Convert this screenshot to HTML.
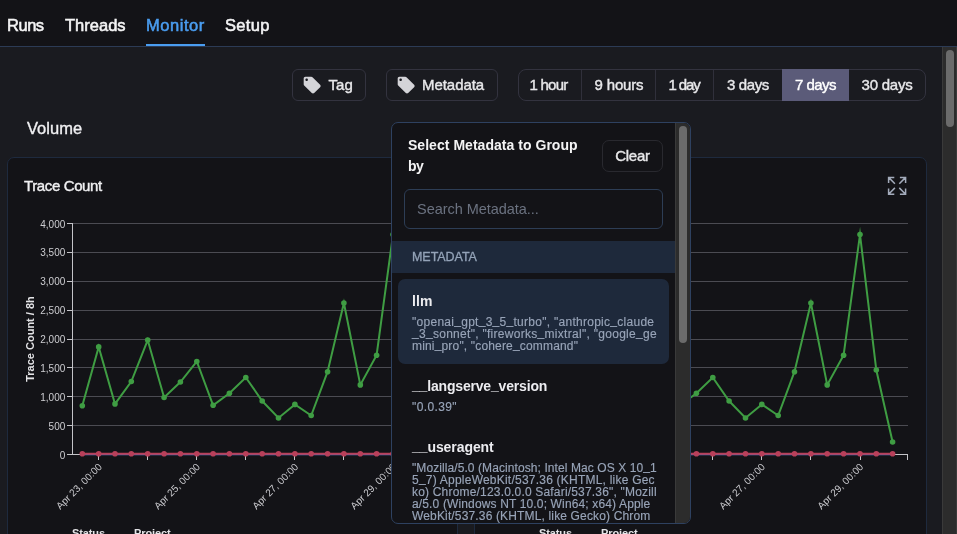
<!DOCTYPE html>
<html><head><meta charset="utf-8">
<style>
*{box-sizing:border-box;margin:0;padding:0}
html,body{width:957px;height:534px;overflow:hidden;background:#1a1b20;font-family:"Liberation Sans",sans-serif;color:#f4f4f5}
.abs{position:absolute}
#hdr{left:0;top:0;width:957px;height:47px;background:#131317;border-bottom:1px solid #2c3b55}
.tab{position:absolute;top:16px;-webkit-text-stroke:0.55px currentColor;font-size:16.5px;line-height:18px;color:#f4f4f5;white-space:nowrap}
.tab.on{color:#4a9df0}
#ul{left:146px;top:44px;width:59px;height:2px;background:#4a9df0}
.btn{-webkit-text-stroke:0.4px currentColor;position:absolute;border:1px solid #33333f;border-radius:6px;height:32px;top:69px;font-size:15px;line-height:30px;color:#e8e8ea;white-space:nowrap}
.seg{position:absolute;top:0;height:30px;line-height:30px;text-align:center;font-size:15px;color:#e8e8ea;border-left:1px solid #30303b}
.card{position:absolute;top:157px;height:400px;background:#131317;border:1px solid #1e2a3e;border-radius:7px}
.ct{position:absolute;top:177px;-webkit-text-stroke:0.4px currentColor;font-size:15px;line-height:18px;color:#f0f0f2}
svg text.tk{font-family:"Liberation Sans",sans-serif;font-size:10px;fill:#cdcdd1}
svg text.yl{font-family:"Liberation Sans",sans-serif;font-size:11px;font-weight:bold;fill:#e4e4e7}
.lg{position:absolute;top:526.3px;font-size:11px;font-weight:bold;color:#e4e4e7;line-height:14px}
#pop{left:391px;top:122px;width:300px;height:402px;background:#131317;border:1px solid #2e4160;border-radius:7px;overflow:hidden}
.it{position:absolute;left:20px;font-size:14px;font-weight:bold;color:#ececf0;white-space:nowrap;line-height:16px}
.iv{position:absolute;left:20px;font-size:12px;line-height:12px;color:#98a4b8;-webkit-text-stroke:0.15px currentColor;white-space:nowrap}
.iv span{display:block}
.iv i{font-style:normal;position:relative;top:-1.6px}
.it i{font-style:normal;position:relative;top:-1px}
.hd{font-size:14px;line-height:21px;font-weight:bold;color:#f4f4f5;white-space:nowrap}
#root{position:absolute;left:0;top:0;width:957px;height:534px;will-change:transform}
</style></head><body><div id="root">
<div class="abs" id="hdr"></div>
<div class="tab" style="left:7px;letter-spacing:-0.477px">Runs</div>
<div class="tab" style="left:65px;letter-spacing:0.011px">Threads</div>
<div class="tab on" style="left:146px;letter-spacing:0.528px">Monitor</div>
<div class="tab" style="left:225px;letter-spacing:0.319px">Setup</div>
<div class="abs" id="ul"></div>

<div class="btn" style="left:292px;width:74px"><svg class="abs" style="left:8.7px;top:4.8px" width="20.3" height="20.3" viewBox="0 0 24 24"><path fill="#d4d4d8" d="M21.41 11.58l-9-9C12.05 2.22 11.55 2 11 2H4c-1.1 0-2 .9-2 2v7c0 .55.22 1.05.59 1.42l9 9c.36.36.86.58 1.41.58s1.05-.22 1.41-.59l7-7c.37-.36.59-.86.59-1.41s-.23-1.06-.59-1.42zM5.5 7C4.67 7 4 6.330 4 5.500S4.670 4 5.500 4 7 4.670 7 5.500 6.330 7 5.500 7z"/></svg><span class="abs" style="left:35.4px;letter-spacing:0.1px">Tag</span></div>
<div class="btn" style="left:386px;width:112px"><svg class="abs" style="left:8.7px;top:4.8px" width="20.3" height="20.3" viewBox="0 0 24 24"><path fill="#d4d4d8" d="M21.41 11.58l-9-9C12.05 2.22 11.55 2 11 2H4c-1.100 0-2 .900-2 2v7c0 .550.220 1.050.590 1.420l9 9c.360.360.860.580 1.410.580s1.050-.220 1.410-.590l7-7c.370-.360.590-.860.590-1.410s-.230-1.060-.590-1.420zM5.500 7C4.670 7 4 6.330 4 5.500S4.670 4 5.500 4 7 4.670 7 5.500 6.330 7 5.500 7z"/></svg><span class="abs" style="left:35px;letter-spacing:-0.05px">Metadata</span></div>

<div class="btn" style="left:518px;width:408px;border-radius:8px">
<div class="seg" style="left:0;width:63px;border-left:0;padding-right:4px;letter-spacing:-0.749px">1 hour</div>
<div class="seg" style="left:62px;width:75px;letter-spacing:-0.174px">9 hours</div>
<div class="seg" style="left:136px;width:59px;padding-right:2px;letter-spacing:-1.126px">1 day</div>
<div class="seg" style="left:194px;width:69px;letter-spacing:-0.381px">3 days</div>
<div class="seg" style="left:263px;width:67px;top:-1px;height:32px;line-height:32px;background:#5b5b79;color:#fff;border-left:0;letter-spacing:-0.561px">7 days</div>
<div class="seg" style="left:330px;width:76px;border-left:0;letter-spacing:-0.224px">30 days</div>
</div>

<div class="abs" style="left:27px;top:118px;-webkit-text-stroke:0.35px currentColor;font-size:16.5px;line-height:20px;color:#f0f0f2;letter-spacing:0.011px">Volume</div>

<div class="card" style="left:7px;width:451px"></div>
<div class="card" style="left:474px;width:453px"></div>
<div class="ct" style="left:24px;letter-spacing:-0.378px">Trace Count</div>
<div class="ct" style="left:490px;letter-spacing:-0.378px">Trace Count</div>

<svg class="abs" style="left:0;top:0" width="957" height="534" viewBox="0 0 957 534">
<line x1="72.5" x2="440.5" y1="425.62" y2="425.62" stroke="#4b4b52" stroke-width="1" shape-rendering="crispEdges"/>
<line x1="72.5" x2="440.5" y1="396.75" y2="396.75" stroke="#4b4b52" stroke-width="1" shape-rendering="crispEdges"/>
<line x1="72.5" x2="440.5" y1="367.88" y2="367.88" stroke="#4b4b52" stroke-width="1" shape-rendering="crispEdges"/>
<line x1="72.5" x2="440.5" y1="339.00" y2="339.00" stroke="#4b4b52" stroke-width="1" shape-rendering="crispEdges"/>
<line x1="72.5" x2="440.5" y1="310.12" y2="310.12" stroke="#4b4b52" stroke-width="1" shape-rendering="crispEdges"/>
<line x1="72.5" x2="440.5" y1="281.25" y2="281.25" stroke="#4b4b52" stroke-width="1" shape-rendering="crispEdges"/>
<line x1="72.5" x2="440.5" y1="252.38" y2="252.38" stroke="#4b4b52" stroke-width="1" shape-rendering="crispEdges"/>
<line x1="72.5" x2="440.5" y1="223.50" y2="223.50" stroke="#4b4b52" stroke-width="1" shape-rendering="crispEdges"/>
<line x1="72.5" x2="72.5" y1="223.0" y2="455.0" stroke="#c4c4c8" stroke-width="1" shape-rendering="crispEdges"/>
<line x1="72.0" x2="441.0" y1="454.5" y2="454.5" stroke="#c4c4c8" stroke-width="1" shape-rendering="crispEdges"/>
<line x1="440.5" x2="440.5" y1="454.5" y2="459.5" stroke="#c4c4c8" stroke-width="1" shape-rendering="crispEdges"/>
<line x1="66.5" x2="72.5" y1="454.50" y2="454.50" stroke="#c4c4c8" stroke-width="1" shape-rendering="crispEdges"/>
<text x="65.3" y="458.50" text-anchor="end" class="tk">0</text>
<line x1="66.5" x2="72.5" y1="425.62" y2="425.62" stroke="#c4c4c8" stroke-width="1" shape-rendering="crispEdges"/>
<text x="65.3" y="429.62" text-anchor="end" class="tk">500</text>
<line x1="66.5" x2="72.5" y1="396.75" y2="396.75" stroke="#c4c4c8" stroke-width="1" shape-rendering="crispEdges"/>
<text x="65.3" y="400.75" text-anchor="end" class="tk">1,000</text>
<line x1="66.5" x2="72.5" y1="367.88" y2="367.88" stroke="#c4c4c8" stroke-width="1" shape-rendering="crispEdges"/>
<text x="65.3" y="371.88" text-anchor="end" class="tk">1,500</text>
<line x1="66.5" x2="72.5" y1="339.00" y2="339.00" stroke="#c4c4c8" stroke-width="1" shape-rendering="crispEdges"/>
<text x="65.3" y="343.00" text-anchor="end" class="tk">2,000</text>
<line x1="66.5" x2="72.5" y1="310.12" y2="310.12" stroke="#c4c4c8" stroke-width="1" shape-rendering="crispEdges"/>
<text x="65.3" y="314.12" text-anchor="end" class="tk">2,500</text>
<line x1="66.5" x2="72.5" y1="281.25" y2="281.25" stroke="#c4c4c8" stroke-width="1" shape-rendering="crispEdges"/>
<text x="65.3" y="285.25" text-anchor="end" class="tk">3,000</text>
<line x1="66.5" x2="72.5" y1="252.38" y2="252.38" stroke="#c4c4c8" stroke-width="1" shape-rendering="crispEdges"/>
<text x="65.3" y="256.38" text-anchor="end" class="tk">3,500</text>
<line x1="66.5" x2="72.5" y1="223.50" y2="223.50" stroke="#c4c4c8" stroke-width="1" shape-rendering="crispEdges"/>
<text x="65.3" y="227.50" text-anchor="end" class="tk">4,000</text>
<line x1="98.7" x2="98.7" y1="454.5" y2="459.5" stroke="#c4c4c8" stroke-width="1" shape-rendering="crispEdges"/>
<text transform="translate(102.7,467.5) rotate(-45)" text-anchor="end" class="tk">Apr 23, 00:00</text>
<line x1="147.7" x2="147.7" y1="454.5" y2="459.5" stroke="#c4c4c8" stroke-width="1" shape-rendering="crispEdges"/>
<line x1="196.8" x2="196.8" y1="454.5" y2="459.5" stroke="#c4c4c8" stroke-width="1" shape-rendering="crispEdges"/>
<text transform="translate(200.8,467.5) rotate(-45)" text-anchor="end" class="tk">Apr 25, 00:00</text>
<line x1="245.8" x2="245.8" y1="454.5" y2="459.5" stroke="#c4c4c8" stroke-width="1" shape-rendering="crispEdges"/>
<line x1="294.9" x2="294.9" y1="454.5" y2="459.5" stroke="#c4c4c8" stroke-width="1" shape-rendering="crispEdges"/>
<text transform="translate(298.9,467.5) rotate(-45)" text-anchor="end" class="tk">Apr 27, 00:00</text>
<line x1="343.9" x2="343.9" y1="454.5" y2="459.5" stroke="#c4c4c8" stroke-width="1" shape-rendering="crispEdges"/>
<line x1="393.0" x2="393.0" y1="454.5" y2="459.5" stroke="#c4c4c8" stroke-width="1" shape-rendering="crispEdges"/>
<text transform="translate(397.0,467.5) rotate(-45)" text-anchor="end" class="tk">Apr 29, 00:00</text>
<text transform="translate(34.0,339.0) rotate(-90)" text-anchor="middle" class="yl">Trace Count / 8h</text>
<polyline points="82.3,405.8 98.7,346.9 115.0,403.9 131.3,381.5 147.7,340.1 164.1,397.5 180.4,382.0 196.8,361.5 213.1,405.3 229.4,393.2 245.8,377.5 262.2,401.0 278.5,418.0 294.9,404.4 311.2,415.5 327.6,371.7 343.9,303.0 360.3,384.9 376.6,355.2 393.0,234.5 409.3,370.0 425.7,442.0" fill="none" stroke="#3f9d43" stroke-width="2" stroke-linejoin="miter" stroke-miterlimit="10"/>
<circle cx="82.3" cy="405.8" r="2.8" fill="#3f9d43"/>
<circle cx="98.7" cy="346.9" r="2.8" fill="#3f9d43"/>
<circle cx="115.0" cy="403.9" r="2.8" fill="#3f9d43"/>
<circle cx="131.3" cy="381.5" r="2.8" fill="#3f9d43"/>
<circle cx="147.7" cy="340.1" r="2.8" fill="#3f9d43"/>
<circle cx="164.1" cy="397.5" r="2.8" fill="#3f9d43"/>
<circle cx="180.4" cy="382.0" r="2.8" fill="#3f9d43"/>
<circle cx="196.8" cy="361.5" r="2.8" fill="#3f9d43"/>
<circle cx="213.1" cy="405.3" r="2.8" fill="#3f9d43"/>
<circle cx="229.4" cy="393.2" r="2.8" fill="#3f9d43"/>
<circle cx="245.8" cy="377.5" r="2.8" fill="#3f9d43"/>
<circle cx="262.2" cy="401.0" r="2.8" fill="#3f9d43"/>
<circle cx="278.5" cy="418.0" r="2.8" fill="#3f9d43"/>
<circle cx="294.9" cy="404.4" r="2.8" fill="#3f9d43"/>
<circle cx="311.2" cy="415.5" r="2.8" fill="#3f9d43"/>
<circle cx="327.6" cy="371.7" r="2.8" fill="#3f9d43"/>
<circle cx="343.9" cy="303.0" r="2.8" fill="#3f9d43"/>
<circle cx="360.3" cy="384.9" r="2.8" fill="#3f9d43"/>
<circle cx="376.6" cy="355.2" r="2.8" fill="#3f9d43"/>
<circle cx="393.0" cy="234.5" r="2.8" fill="#3f9d43"/>
<circle cx="409.3" cy="370.0" r="2.8" fill="#3f9d43"/>
<circle cx="425.7" cy="442.0" r="2.8" fill="#3f9d43"/>
<line x1="82.3" x2="425.7" y1="454.5" y2="454.5" stroke="#4f74c8" stroke-width="1.6"/>
<line x1="82.3" x2="425.7" y1="453.7" y2="453.7" stroke="#b8405a" stroke-width="2"/>
<circle cx="82.3" cy="453.7" r="2.8" fill="#b8405a"/>
<circle cx="98.7" cy="453.7" r="2.8" fill="#b8405a"/>
<circle cx="115.0" cy="453.7" r="2.8" fill="#b8405a"/>
<circle cx="131.3" cy="453.7" r="2.8" fill="#b8405a"/>
<circle cx="147.7" cy="453.7" r="2.8" fill="#b8405a"/>
<circle cx="164.1" cy="453.7" r="2.8" fill="#b8405a"/>
<circle cx="180.4" cy="453.7" r="2.8" fill="#b8405a"/>
<circle cx="196.8" cy="453.7" r="2.8" fill="#b8405a"/>
<circle cx="213.1" cy="453.7" r="2.8" fill="#b8405a"/>
<circle cx="229.4" cy="453.7" r="2.8" fill="#b8405a"/>
<circle cx="245.8" cy="453.7" r="2.8" fill="#b8405a"/>
<circle cx="262.2" cy="453.7" r="2.8" fill="#b8405a"/>
<circle cx="278.5" cy="453.7" r="2.8" fill="#b8405a"/>
<circle cx="294.9" cy="453.7" r="2.8" fill="#b8405a"/>
<circle cx="311.2" cy="453.7" r="2.8" fill="#b8405a"/>
<circle cx="327.6" cy="453.7" r="2.8" fill="#b8405a"/>
<circle cx="343.9" cy="453.7" r="2.8" fill="#b8405a"/>
<circle cx="360.3" cy="453.7" r="2.8" fill="#b8405a"/>
<circle cx="376.6" cy="453.7" r="2.8" fill="#b8405a"/>
<circle cx="393.0" cy="453.7" r="2.8" fill="#b8405a"/>
<circle cx="409.3" cy="453.7" r="2.8" fill="#b8405a"/>
<circle cx="425.7" cy="453.7" r="2.8" fill="#b8405a"/>
<line x1="539.5" x2="907.5" y1="425.62" y2="425.62" stroke="#4b4b52" stroke-width="1" shape-rendering="crispEdges"/>
<line x1="539.5" x2="907.5" y1="396.75" y2="396.75" stroke="#4b4b52" stroke-width="1" shape-rendering="crispEdges"/>
<line x1="539.5" x2="907.5" y1="367.88" y2="367.88" stroke="#4b4b52" stroke-width="1" shape-rendering="crispEdges"/>
<line x1="539.5" x2="907.5" y1="339.00" y2="339.00" stroke="#4b4b52" stroke-width="1" shape-rendering="crispEdges"/>
<line x1="539.5" x2="907.5" y1="310.12" y2="310.12" stroke="#4b4b52" stroke-width="1" shape-rendering="crispEdges"/>
<line x1="539.5" x2="907.5" y1="281.25" y2="281.25" stroke="#4b4b52" stroke-width="1" shape-rendering="crispEdges"/>
<line x1="539.5" x2="907.5" y1="252.38" y2="252.38" stroke="#4b4b52" stroke-width="1" shape-rendering="crispEdges"/>
<line x1="539.5" x2="907.5" y1="223.50" y2="223.50" stroke="#4b4b52" stroke-width="1" shape-rendering="crispEdges"/>
<line x1="539.5" x2="539.5" y1="223.0" y2="455.0" stroke="#c4c4c8" stroke-width="1" shape-rendering="crispEdges"/>
<line x1="539.0" x2="908.0" y1="454.5" y2="454.5" stroke="#c4c4c8" stroke-width="1" shape-rendering="crispEdges"/>
<line x1="907.5" x2="907.5" y1="454.5" y2="459.5" stroke="#c4c4c8" stroke-width="1" shape-rendering="crispEdges"/>
<line x1="533.5" x2="539.5" y1="454.50" y2="454.50" stroke="#c4c4c8" stroke-width="1" shape-rendering="crispEdges"/>
<text x="532.3" y="458.50" text-anchor="end" class="tk">0</text>
<line x1="533.5" x2="539.5" y1="425.62" y2="425.62" stroke="#c4c4c8" stroke-width="1" shape-rendering="crispEdges"/>
<text x="532.3" y="429.62" text-anchor="end" class="tk">500</text>
<line x1="533.5" x2="539.5" y1="396.75" y2="396.75" stroke="#c4c4c8" stroke-width="1" shape-rendering="crispEdges"/>
<text x="532.3" y="400.75" text-anchor="end" class="tk">1,000</text>
<line x1="533.5" x2="539.5" y1="367.88" y2="367.88" stroke="#c4c4c8" stroke-width="1" shape-rendering="crispEdges"/>
<text x="532.3" y="371.88" text-anchor="end" class="tk">1,500</text>
<line x1="533.5" x2="539.5" y1="339.00" y2="339.00" stroke="#c4c4c8" stroke-width="1" shape-rendering="crispEdges"/>
<text x="532.3" y="343.00" text-anchor="end" class="tk">2,000</text>
<line x1="533.5" x2="539.5" y1="310.12" y2="310.12" stroke="#c4c4c8" stroke-width="1" shape-rendering="crispEdges"/>
<text x="532.3" y="314.12" text-anchor="end" class="tk">2,500</text>
<line x1="533.5" x2="539.5" y1="281.25" y2="281.25" stroke="#c4c4c8" stroke-width="1" shape-rendering="crispEdges"/>
<text x="532.3" y="285.25" text-anchor="end" class="tk">3,000</text>
<line x1="533.5" x2="539.5" y1="252.38" y2="252.38" stroke="#c4c4c8" stroke-width="1" shape-rendering="crispEdges"/>
<text x="532.3" y="256.38" text-anchor="end" class="tk">3,500</text>
<line x1="533.5" x2="539.5" y1="223.50" y2="223.50" stroke="#c4c4c8" stroke-width="1" shape-rendering="crispEdges"/>
<text x="532.3" y="227.50" text-anchor="end" class="tk">4,000</text>
<line x1="565.6" x2="565.6" y1="454.5" y2="459.5" stroke="#c4c4c8" stroke-width="1" shape-rendering="crispEdges"/>
<text transform="translate(569.6,467.5) rotate(-45)" text-anchor="end" class="tk">Apr 23, 00:00</text>
<line x1="614.7" x2="614.7" y1="454.5" y2="459.5" stroke="#c4c4c8" stroke-width="1" shape-rendering="crispEdges"/>
<line x1="663.8" x2="663.8" y1="454.5" y2="459.5" stroke="#c4c4c8" stroke-width="1" shape-rendering="crispEdges"/>
<text transform="translate(667.8,467.5) rotate(-45)" text-anchor="end" class="tk">Apr 25, 00:00</text>
<line x1="712.8" x2="712.8" y1="454.5" y2="459.5" stroke="#c4c4c8" stroke-width="1" shape-rendering="crispEdges"/>
<line x1="761.8" x2="761.8" y1="454.5" y2="459.5" stroke="#c4c4c8" stroke-width="1" shape-rendering="crispEdges"/>
<text transform="translate(765.8,467.5) rotate(-45)" text-anchor="end" class="tk">Apr 27, 00:00</text>
<line x1="810.9" x2="810.9" y1="454.5" y2="459.5" stroke="#c4c4c8" stroke-width="1" shape-rendering="crispEdges"/>
<line x1="860.0" x2="860.0" y1="454.5" y2="459.5" stroke="#c4c4c8" stroke-width="1" shape-rendering="crispEdges"/>
<text transform="translate(864.0,467.5) rotate(-45)" text-anchor="end" class="tk">Apr 29, 00:00</text>
<text transform="translate(501.0,339.0) rotate(-90)" text-anchor="middle" class="yl">Trace Count / 8h</text>
<polyline points="549.3,405.8 565.6,346.9 582.0,403.9 598.3,381.5 614.7,340.1 631.0,397.5 647.4,382.0 663.8,361.5 680.1,405.3 696.4,393.2 712.8,377.5 729.1,401.0 745.5,418.0 761.8,404.4 778.2,415.5 794.5,371.7 810.9,303.0 827.2,384.9 843.6,355.2 860.0,234.5 876.3,370.0 892.6,442.0" fill="none" stroke="#3f9d43" stroke-width="2" stroke-linejoin="miter" stroke-miterlimit="10"/>
<circle cx="549.3" cy="405.8" r="2.8" fill="#3f9d43"/>
<circle cx="565.6" cy="346.9" r="2.8" fill="#3f9d43"/>
<circle cx="582.0" cy="403.9" r="2.8" fill="#3f9d43"/>
<circle cx="598.3" cy="381.5" r="2.8" fill="#3f9d43"/>
<circle cx="614.7" cy="340.1" r="2.8" fill="#3f9d43"/>
<circle cx="631.0" cy="397.5" r="2.8" fill="#3f9d43"/>
<circle cx="647.4" cy="382.0" r="2.8" fill="#3f9d43"/>
<circle cx="663.8" cy="361.5" r="2.8" fill="#3f9d43"/>
<circle cx="680.1" cy="405.3" r="2.8" fill="#3f9d43"/>
<circle cx="696.4" cy="393.2" r="2.8" fill="#3f9d43"/>
<circle cx="712.8" cy="377.5" r="2.8" fill="#3f9d43"/>
<circle cx="729.1" cy="401.0" r="2.8" fill="#3f9d43"/>
<circle cx="745.5" cy="418.0" r="2.8" fill="#3f9d43"/>
<circle cx="761.8" cy="404.4" r="2.8" fill="#3f9d43"/>
<circle cx="778.2" cy="415.5" r="2.8" fill="#3f9d43"/>
<circle cx="794.5" cy="371.7" r="2.8" fill="#3f9d43"/>
<circle cx="810.9" cy="303.0" r="2.8" fill="#3f9d43"/>
<circle cx="827.2" cy="384.9" r="2.8" fill="#3f9d43"/>
<circle cx="843.6" cy="355.2" r="2.8" fill="#3f9d43"/>
<circle cx="860.0" cy="234.5" r="2.8" fill="#3f9d43"/>
<circle cx="876.3" cy="370.0" r="2.8" fill="#3f9d43"/>
<circle cx="892.6" cy="442.0" r="2.8" fill="#3f9d43"/>
<line x1="549.3" x2="892.6" y1="454.5" y2="454.5" stroke="#4f74c8" stroke-width="1.6"/>
<line x1="549.3" x2="892.6" y1="453.7" y2="453.7" stroke="#b8405a" stroke-width="2"/>
<circle cx="549.3" cy="453.7" r="2.8" fill="#b8405a"/>
<circle cx="565.6" cy="453.7" r="2.8" fill="#b8405a"/>
<circle cx="582.0" cy="453.7" r="2.8" fill="#b8405a"/>
<circle cx="598.3" cy="453.7" r="2.8" fill="#b8405a"/>
<circle cx="614.7" cy="453.7" r="2.8" fill="#b8405a"/>
<circle cx="631.0" cy="453.7" r="2.8" fill="#b8405a"/>
<circle cx="647.4" cy="453.7" r="2.8" fill="#b8405a"/>
<circle cx="663.8" cy="453.7" r="2.8" fill="#b8405a"/>
<circle cx="680.1" cy="453.7" r="2.8" fill="#b8405a"/>
<circle cx="696.4" cy="453.7" r="2.8" fill="#b8405a"/>
<circle cx="712.8" cy="453.7" r="2.8" fill="#b8405a"/>
<circle cx="729.1" cy="453.7" r="2.8" fill="#b8405a"/>
<circle cx="745.5" cy="453.7" r="2.8" fill="#b8405a"/>
<circle cx="761.8" cy="453.7" r="2.8" fill="#b8405a"/>
<circle cx="778.2" cy="453.7" r="2.8" fill="#b8405a"/>
<circle cx="794.5" cy="453.7" r="2.8" fill="#b8405a"/>
<circle cx="810.9" cy="453.7" r="2.8" fill="#b8405a"/>
<circle cx="827.2" cy="453.7" r="2.8" fill="#b8405a"/>
<circle cx="843.6" cy="453.7" r="2.8" fill="#b8405a"/>
<circle cx="860.0" cy="453.7" r="2.8" fill="#b8405a"/>
<circle cx="876.3" cy="453.7" r="2.8" fill="#b8405a"/>
<circle cx="892.6" cy="453.7" r="2.8" fill="#b8405a"/>
<g fill="none" stroke="#a3abbb" stroke-width="1.5" stroke-linecap="butt" stroke-linejoin="miter">
<path d="M888.6 183.1v-5.7h5.7M888.6 177.4l6.3 6.3M905.6 183.1v-5.700h-5.700M905.600 177.400l-6.300 6.300M888.600 188.500v5.700h5.700M888.600 194.200l6.300-6.300M905.600 188.500v5.700h-5.700M905.600 194.200l-6.300-6.300"/>
</g>
</svg>

<div class="lg" style="left:72px;letter-spacing:-0.125px">Status</div>
<div class="lg" style="left:134px;letter-spacing:-0.116px">Project</div>
<div class="lg" style="left:539px;letter-spacing:-0.125px">Status</div>
<div class="lg" style="left:601px;letter-spacing:-0.116px">Project</div>

<!-- page scrollbar -->
<div class="abs" style="left:942px;top:47px;width:15px;height:487px;background:#2c2c2c;border-left:1px solid #3a3a3a;border-right:1px solid #3a3a3a"></div>
<div class="abs" style="left:946px;top:50px;width:8px;height:77px;background:#6b6b6b;border-radius:4px"></div>

<!-- popup -->
<div class="abs" id="pop">
 <div class="abs hd" style="left:16px;top:12px"><span style="letter-spacing:0.034px">Select Metadata to Group</span><br><span style="letter-spacing:-0.544px">by</span></div>
 <div class="abs" style="left:210px;top:17px;width:61px;height:32px;border:1px solid #29292f;border-radius:7px;font-size:15px;line-height:30px;text-align:center;color:#e8e8ea;-webkit-text-stroke:0.4px currentColor;letter-spacing:-0.24px">Clear</div>
 <div class="abs" style="left:12px;top:66px;width:259px;height:40px;border:1px solid #2d3d55;border-radius:6px;font-size:14.5px;line-height:38px;padding-left:12px;color:#6b7280;letter-spacing:-0.042px">Search Metadata...</div>
 <div class="abs" style="left:0;top:118px;width:284px;height:32px;background:#1e293b"></div>
 <div class="abs" style="left:20px;top:118px;font-size:12.5px;line-height:32px;color:#94a3b8;-webkit-text-stroke:0.3px currentColor;letter-spacing:-0.054px">METADATA</div>
 <div class="abs" style="left:6px;top:156px;width:271px;height:85px;background:#1e293b;border-radius:7px"></div>
 <div class="it" style="top:169.5px;letter-spacing:0.083px">llm</div>
 <div class="iv" style="top:193px"><span style="letter-spacing:0.276px">"openai<i>_</i>gpt<i>_</i>3<i>_</i>5<i>_</i>turbo", "anthropic<i>_</i>claude</span><span style="letter-spacing:0.288px"><i>_</i>3<i>_</i>sonnet", "fireworks<i>_</i>mixtral", "google<i>_</i>ge</span><span style="letter-spacing:0.168px">mini<i>_</i>pro", "cohere<i>_</i>command"</span></div>
 <div class="it" style="top:255px;letter-spacing:-0.18px"><i>_</i><i>_</i>langserve<i>_</i>version</div>
 <div class="iv" style="top:278px;letter-spacing:0.373px">"0.0.39"</div>
 <div class="it" style="top:316px;letter-spacing:-0.078px"><i>_</i><i>_</i>useragent</div>
 <div class="iv" style="top:339px"><span style="letter-spacing:0.083px">"Mozilla/5.0 (Macintosh; Intel Mac OS X 10<i>_</i>1</span><span style="letter-spacing:0.223px">5<i>_</i>7) AppleWebKit/537.36 (KHTML, like Gec</span><span style="letter-spacing:0.185px">ko) Chrome/123.0.0.0 Safari/537.36", "Mozill</span><span style="letter-spacing:0.143px">a/5.0 (Windows NT 10.0; Win64; x64) Apple</span><span style="letter-spacing:0.152px">WebKit/537.36 (KHTML, like Gecko) Chrom</span></div>
 <div class="abs" style="left:283px;top:0;width:15px;height:400px;background:#2c2c2c;border-left:1px solid #3a3a3a"></div>
 <div class="abs" style="left:287px;top:3px;width:8px;height:217px;background:#6b6b6b;border-radius:4px"></div>
</div>
</div></body></html>
